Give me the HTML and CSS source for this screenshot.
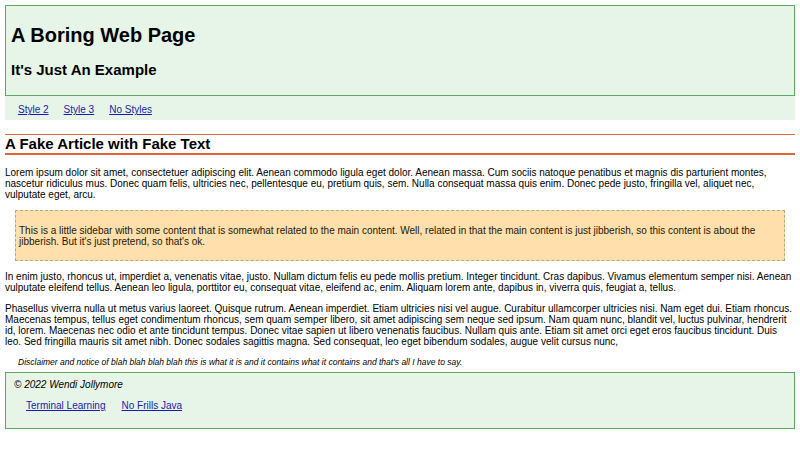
FILE: index.html
```html
<!DOCTYPE html>
<html lang="en">

<head>
    <meta charset="UTF-8">
    <meta name="viewport" content="width=device-width, initial-scale=1.0">
    <title>A Boring Web Page</title>
    <link rel="stylesheet" href="styles.css">
</head>

<body>
    <header class="site-header">
        <h1>A Boring Web Page</h1>
        <h2>It's Just An Example</h2>
    </header>
    <nav class="site-nav">
        <a href="#">Style 2</a>
        <a href="#">Style 3</a>
        <a href="#">No Styles</a>
    </nav>

    <main>
        <article>
            <h2 class="article-title">A Fake Article with Fake Text</h2>
            <p>Lorem ipsum dolor sit amet, consectetuer adipiscing elit. Aenean commodo ligula eget dolor. Aenean massa. Cum sociis natoque penatibus et magnis dis parturient montes, nascetur ridiculus mus. Donec quam felis, ultricies nec, pellentesque eu, pretium quis, sem. Nulla consequat massa quis enim. Donec pede justo, fringilla vel, aliquet nec, vulputate eget, arcu.</p>
            <aside class="sidebar">
                <p>This is a little sidebar with some content that is somewhat related to the main content. Well, related in that the main content is just jibberish, so this content is about the jibberish. But it's just pretend, so that's ok.</p>
            </aside>
            <p>In enim justo, rhoncus ut, imperdiet a, venenatis vitae, justo. Nullam dictum felis eu pede mollis pretium. Integer tincidunt. Cras dapibus. Vivamus elementum semper nisi. Aenean vulputate eleifend tellus. Aenean leo ligula, porttitor eu, consequat vitae, eleifend ac, enim. Aliquam lorem ante, dapibus in, viverra quis, feugiat a, tellus.</p>
            <p>Phasellus viverra nulla ut metus varius laoreet. Quisque rutrum. Aenean imperdiet. Etiam ultricies nisi vel augue. Curabitur ullamcorper ultricies nisi. Nam eget dui. Etiam rhoncus. Maecenas tempus, tellus eget condimentum rhoncus, sem quam semper libero, sit amet adipiscing sem neque sed ipsum. Nam quam nunc, blandit vel, luctus pulvinar, hendrerit id, lorem. Maecenas nec odio et ante tincidunt tempus. Donec vitae sapien ut libero venenatis faucibus. Nullam quis ante. Etiam sit amet orci eget eros faucibus tincidunt. Duis leo. Sed fringilla mauris sit amet nibh. Donec sodales sagittis magna. Sed consequat, leo eget bibendum sodales, augue velit cursus nunc,</p>
        </article>
        <p class="disclaimer">Disclaimer and notice of blah blah blah blah this is what it is and it contains what it contains and that's all I have to say.</p>
    </main>

    <footer class="site-footer">
        <p class="copyright">&copy; 2022 Wendi Jollymore</p>
        <div class="footer-links">
            <a href="#">Terminal Learning</a>
            <a href="#">No Frills Java</a>
        </div>
    </footer>
</body>

</html>
```

FILE: styles.css
```css
body {
    margin: 5px;
    font-family: "Liberation Sans", Arial, sans-serif;
    font-size: 10px;
    color: #000;
    background: #fff;
}

a {
    color: #1a1ab0;
}

/* cabecalho */
.site-header {
    background-color: #e7f5e8;
    border: 1px solid #5fa860;
    padding: 5px;
}

.site-header h1 {
    font-size: 20px;
    margin: 13.4px 0;
}

.site-header h2 {
    font-size: 15px;
    margin: 13.4px 0 12.4px;
}

.site-nav {
    display: flex;
    gap: 15px;
    background-color: #e7f5e8;
    padding: 8px 13px 5px;
}

/* artigo */
.article-title {
    font-size: 15px;
    margin: 13.5px 0 12.5px;
    padding-bottom: 1px;
    border-top: 1px solid #e0663a;
    border-bottom: 2px solid #e0663a;
}

article p {
    margin: 10px 0;
}

.sidebar {
    margin: 10px 10px;
    padding: 4px 3px 3px;
    background-color: #ffdfab;
    border: 1px dashed #b9a878;
    color: #1e180c;
}

.disclaimer {
    font-size: 8.5px;
    font-style: italic;
    margin: 10px 0 5px;
    padding-left: 13px;
}

/* rodape */
.site-footer {
    background-color: #e7f5e8;
    border: 1px solid #5fa860;
    padding: 6px 8px 17px;
}

.copyright {
    font-style: italic;
    margin: 0 0 10px;
}

.footer-links {
    display: flex;
    gap: 16px;
    padding-left: 12px;
}
```
